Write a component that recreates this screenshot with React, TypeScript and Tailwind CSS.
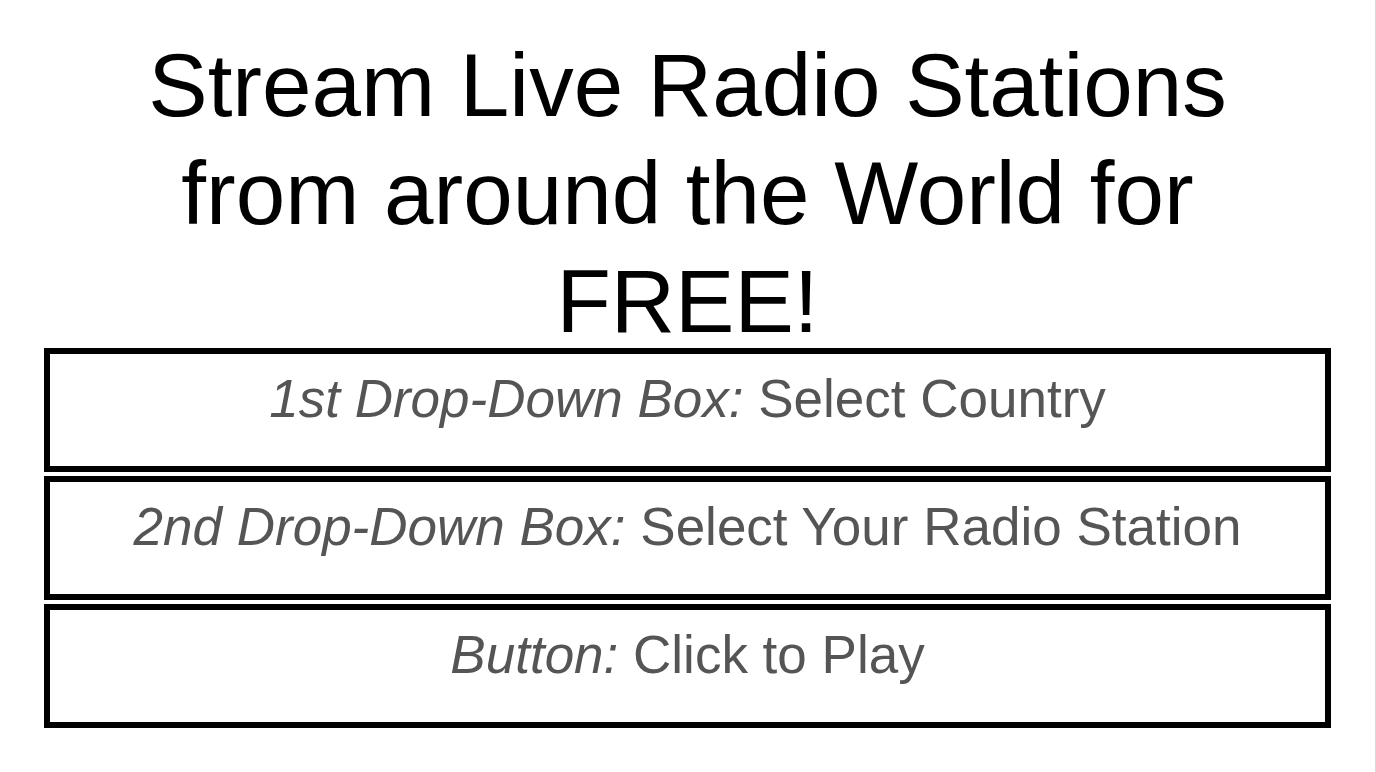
const boxes = [
  { label: "1st Drop-Down Box:", text: "Select Country" },
  { label: "2nd Drop-Down Box:", text: "Select Your Radio Station" },
  { label: "Button:", text: "Click to Play" },
];

const App = () => {
  return (
    <div className="min-h-[772px] w-full bg-white border-r border-[#d9d9d9] font-['Liberation_Sans',Arial,sans-serif]">
      {/* Heading */}
      <h1 className="pt-[31px] px-[120px] text-center text-[89px] leading-[108px] text-black">
        Stream Live Radio Stations from around the World for FREE!
      </h1>

      {/* Steps */}
      <div className="-mt-[7px] mx-[44px] flex flex-col gap-[4px]">
        {boxes.map((b) => (
          <div
            key={b.label}
            className="h-[124px] border-[6px] border-black pt-[14px] text-center text-[53px] leading-[61px] text-[#555555]"
          >
            <i>{b.label}</i> {b.text}
          </div>
        ))}
      </div>
    </div>
  );
};

export default App;
